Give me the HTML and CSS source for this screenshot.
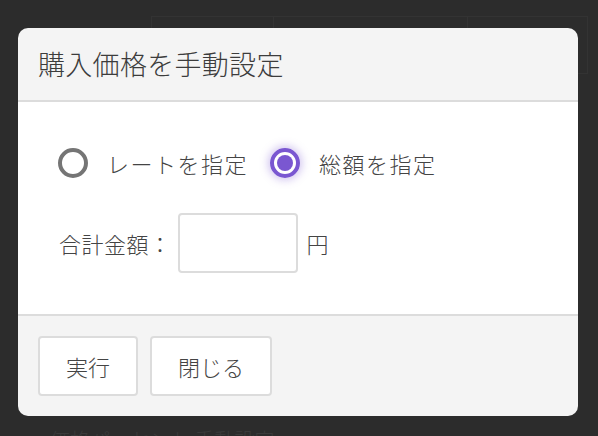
FILE: index.html
```html
<!DOCTYPE html>
<html lang="ja">
<head>
  <meta charset="UTF-8">
  <meta name="viewport" content="width=device-width, initial-scale=1.0">
  <title>購入価格を手動設定</title>
  <link rel="stylesheet" href="styles.css">
</head>
<body>
  <div class="backdrop">
    <div class="bg-table">
      <div class="bg-cell bg-cell-a"></div>
      <div class="bg-cell bg-cell-b"></div>
      <div class="bg-cell bg-cell-c"></div>
    </div>
    <div class="bg-text">価格パーセント 手動設定</div>
  </div>

  <div class="dialog">
    <div class="dialog-header">
      <h1>購入価格を手動設定</h1>
    </div>

    <div class="dialog-body">
      <div class="radio-row">
        <label class="radio">
          <input type="radio" name="mode" value="rate">
          <span class="radio-mark"></span>
          <span class="radio-label">レートを指定</span>
        </label>
        <label class="radio">
          <input type="radio" name="mode" value="total" checked>
          <span class="radio-mark"></span>
          <span class="radio-label">総額を指定</span>
        </label>
      </div>

      <div class="total-row">
        <span class="total-label">合計金額：</span>
        <input type="text" class="total-input">
        <span class="unit">円</span>
      </div>
    </div>

    <div class="dialog-footer">
      <button class="btn">実行</button>
      <button class="btn">閉じる</button>
    </div>
  </div>
</body>
</html>
```

FILE: styles.css
```css
html, body {
  margin: 0;
  padding: 0;
  height: 100%;
}

body {
  font-family: "Noto Sans CJK JP", "Noto Sans", sans-serif;
  font-weight: 300;
  background-color: #2c2c2c;
  color: #444;
  position: relative;
  overflow: hidden;
}

.backdrop {
  padding: 16px 10px 0 151px;
}

.bg-table {
  display: flex;
  height: 56px;
  border: 1px solid #333;
}

.bg-cell {
  border-right: 1px solid #333;
}

.bg-cell-a {
  width: 121px;
}

.bg-cell-b {
  width: 193px;
}

.bg-cell-c {
  flex: 1;
  border-right: none;
}

.bg-text {
  position: absolute;
  left: 50px;
  top: 430px;
  font-size: 20px;
  line-height: 1;
  color: #3a3a3a;
}

.dialog {
  position: absolute;
  left: 18px;
  top: 28px;
  width: 560px;
  height: 388px;
  background-color: #f4f4f4;
  border-radius: 10px;
  overflow: hidden;
  display: flex;
  flex-direction: column;
}

.dialog-header {
  height: 72px;
  border-bottom: 2px solid #dcdcdc;
  display: flex;
  align-items: center;
  padding: 0 20px;
}

.dialog-header h1 {
  margin: 0;
  font-size: 27px;
  font-weight: 300;
  letter-spacing: 0.3px;
  color: #3c3c3c;
  line-height: 1;
  padding-bottom: 2px;
}

.dialog-body {
  background-color: #fff;
  height: 212px;
  border-bottom: 2px solid #dcdcdc;
  padding: 0 40px;
}

.radio-row {
  display: flex;
  align-items: center;
  height: 30px;
  margin-top: 46px;
}

.radio {
  display: flex;
  align-items: center;
  margin-right: 22px;
  cursor: pointer;
}

.radio input {
  display: none;
}

.radio-mark {
  width: 22px;
  height: 22px;
  border: 4px solid #757575;
  border-radius: 50%;
  position: relative;
}

.radio input:checked + .radio-mark {
  border-color: #7a57d1;
  box-shadow: 0 0 8px 2px rgba(122, 87, 209, 0.35);
}

.radio input:checked + .radio-mark::after {
  content: "";
  position: absolute;
  left: 3px;
  top: 3px;
  width: 16px;
  height: 16px;
  border-radius: 50%;
  background-color: #7a57d1;
}

.radio-label {
  font-size: 22px;
  margin-left: 19px;
  letter-spacing: 1.5px;
  color: #444;
}

.total-row {
  display: flex;
  align-items: center;
  margin-top: 35px;
  padding-left: 1px;
}

.total-label {
  font-size: 22px;
  letter-spacing: 0.5px;
}

.total-input {
  width: 116px;
  height: 56px;
  box-sizing: content-box;
  padding: 0;
  border: 2px solid #dcdcdc;
  border-radius: 4px;
  margin-left: 6px;
  font-size: 20px;
}

.unit {
  font-size: 22px;
  margin-left: 9px;
}

.dialog-footer {
  display: flex;
  align-items: flex-start;
  padding: 20px 20px 0;
  gap: 12px;
}

.btn {
  height: 60px;
  padding: 0 26px;
  background-color: #fff;
  border: 2px solid #dcdcdc;
  border-radius: 4px;
  font-family: inherit;
  font-weight: 300;
  font-size: 22px;
  color: #444;
  cursor: pointer;
}

.btn:hover {
  background-color: #fafafa;
}
```
